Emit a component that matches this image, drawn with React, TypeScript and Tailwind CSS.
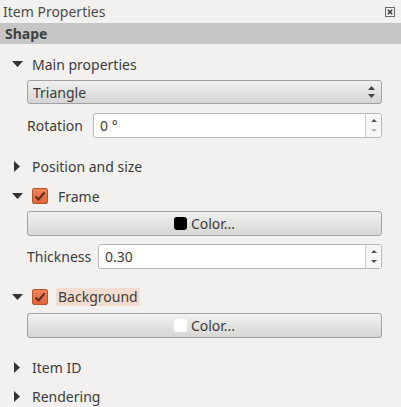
import React from "react";

const font = { fontFamily: '"Noto Sans", "Open Sans", sans-serif' };

function Down() {
  return (
    <svg width="11" height="6" viewBox="0 0 11 6" className="shrink-0">
      <polygon points="0,0 11,0 5.5,6" fill="#333" />
    </svg>
  );
}
function Right() {
  return (
    <svg width="6" height="11" viewBox="0 0 6 11" className="shrink-0">
      <polygon points="0,0 6,5.5 0,11" fill="#333" />
    </svg>
  );
}
function Check() {
  return (
    <div className="w-[16px] h-[16px] rounded-[2px] border border-[#b8532a] bg-gradient-to-b from-[#f0845a] to-[#df6437] flex items-center justify-center shrink-0">
      <svg width="12" height="11" viewBox="0 0 12 11">
        <path d="M1.5 5.5 L4.5 8.5 L10.5 1.5" stroke="#5a2c1c" strokeWidth="2" fill="none" />
      </svg>
    </div>
  );
}
function Spin({ disabledDown }: { disabledDown?: boolean }) {
  return (
    <div className="w-[16px] h-full border-l border-[#d0cfcc] flex flex-col items-center justify-center gap-[7px] bg-[#f7f7f6]">
      <svg width="6" height="3" viewBox="0 0 6 3"><polygon points="0,3 6,3 3,0" fill="#555" /></svg>
      <svg width="6" height="3" viewBox="0 0 6 3"><polygon points="0,0 6,0 3,3" fill={disabledDown ? "#b5b5b5" : "#555"} /></svg>
    </div>
  );
}

function Header({ arrow, children }: { arrow: "down" | "right"; children: React.ReactNode }) {
  return (
    <div className="h-[22px] flex items-center">
      <div className="w-[32px] flex items-center justify-center pl-[2px]">
        {arrow === "down" ? <Down /> : <Right />}
      </div>
      {children}
    </div>
  );
}

function Btn({ swatch }: { swatch: string }) {
  return (
    <div className="ml-[27px] mr-[19px] h-[25px] rounded-[3px] border border-[#a3a2a0] bg-gradient-to-b from-[#f1f1f0] to-[#d6d6d5] flex items-center justify-center gap-[4px]">
      <div className="w-[13px] h-[13px] rounded-[3px]" style={{ background: swatch }} />
      <span className="text-[14px] text-[#3c3c3c]">Color...</span>
    </div>
  );
}

export default function App() {
  return (
    <div style={font} className="w-[401px] h-[407px] bg-[#f2f1f0] text-[#3c3c3c] overflow-hidden flex flex-col text-[14px]">
      <div className="h-[23px] flex items-center justify-between pl-[3px] pr-[5px]">
        <span className="text-[14px] text-[#4c4c4c]">Item Properties</span>
        <svg width="10" height="10" viewBox="0 0 10 10" className="mr-[1px]">
          <rect x="0.5" y="0.5" width="9" height="9" fill="#f0f0f0" stroke="#6a6a6a" />
          <path d="M2.8 2.8 L7.2 7.2 M7.2 2.8 L2.8 7.2" stroke="#3c3c3c" strokeWidth="1.6" />
        </svg>
      </div>
      <div className="h-[21px] bg-[#c6c6c6] flex items-center pl-[5px]">
        <span className="font-bold text-[14px] text-[#404040]">Shape</span>
      </div>

      <div className="mt-[9px]">
        <Header arrow="down"><span>Main properties</span></Header>
      </div>
      <div className="mt-[5px] ml-[27px] mr-[19px] h-[24px] rounded-[3px] border border-[#a3a2a0] bg-gradient-to-b from-[#f0f0ef] to-[#d5d5d4] flex items-center justify-between pl-[5px] pr-[6px]">
        <span>Triangle</span>
        <div className="flex flex-col items-center gap-[4px]">
          <svg width="7" height="4" viewBox="0 0 7 4"><polygon points="0,4 7,4 3.5,0" fill="#444" /></svg>
          <svg width="7" height="4" viewBox="0 0 7 4"><polygon points="0,0 7,0 3.5,4" fill="#444" /></svg>
        </div>
      </div>
      <div className="mt-[9px] h-[25px] flex items-center pl-[27px] pr-[19px]">
        <span className="w-[66px]">Rotation</span>
        <div className="flex-1 h-full rounded-[3px] border border-[#b9b8b5] bg-white flex items-center overflow-hidden">
          <span className="flex-1 pl-[6px]">0 °</span>
          <Spin disabledDown />
        </div>
      </div>

      <div className="mt-[17px]">
        <Header arrow="right"><span>Position and size</span></Header>
      </div>

      <div className="mt-[8px]">
        <Header arrow="down">
          <Check />
          <span className="ml-[10px]">Frame</span>
        </Header>
      </div>
      <div className="mt-[4px]"><Btn swatch="#000" /></div>
      <div className="mt-[8px] h-[25px] flex items-center pl-[27px] pr-[19px]">
        <span className="w-[71px]">Thickness</span>
        <div className="flex-1 h-full rounded-[3px] border border-[#b9b8b5] bg-white flex items-center overflow-hidden">
          <span className="flex-1 pl-[6px]">0.30</span>
          <Spin />
        </div>
      </div>

      <div className="mt-[17px]">
        <Header arrow="down">
          <Check />
          <span className="ml-[8px] px-[2px] bg-[#f4dcd1] leading-[18px]">Background</span>
        </Header>
      </div>
      <div className="mt-[5px]"><Btn swatch="#fff" /></div>

      <div className="mt-[18px]">
        <Header arrow="right"><span>Item ID</span></Header>
      </div>
      <div className="mt-[7px]">
        <Header arrow="right"><span>Rendering</span></Header>
      </div>
    </div>
  );
}
